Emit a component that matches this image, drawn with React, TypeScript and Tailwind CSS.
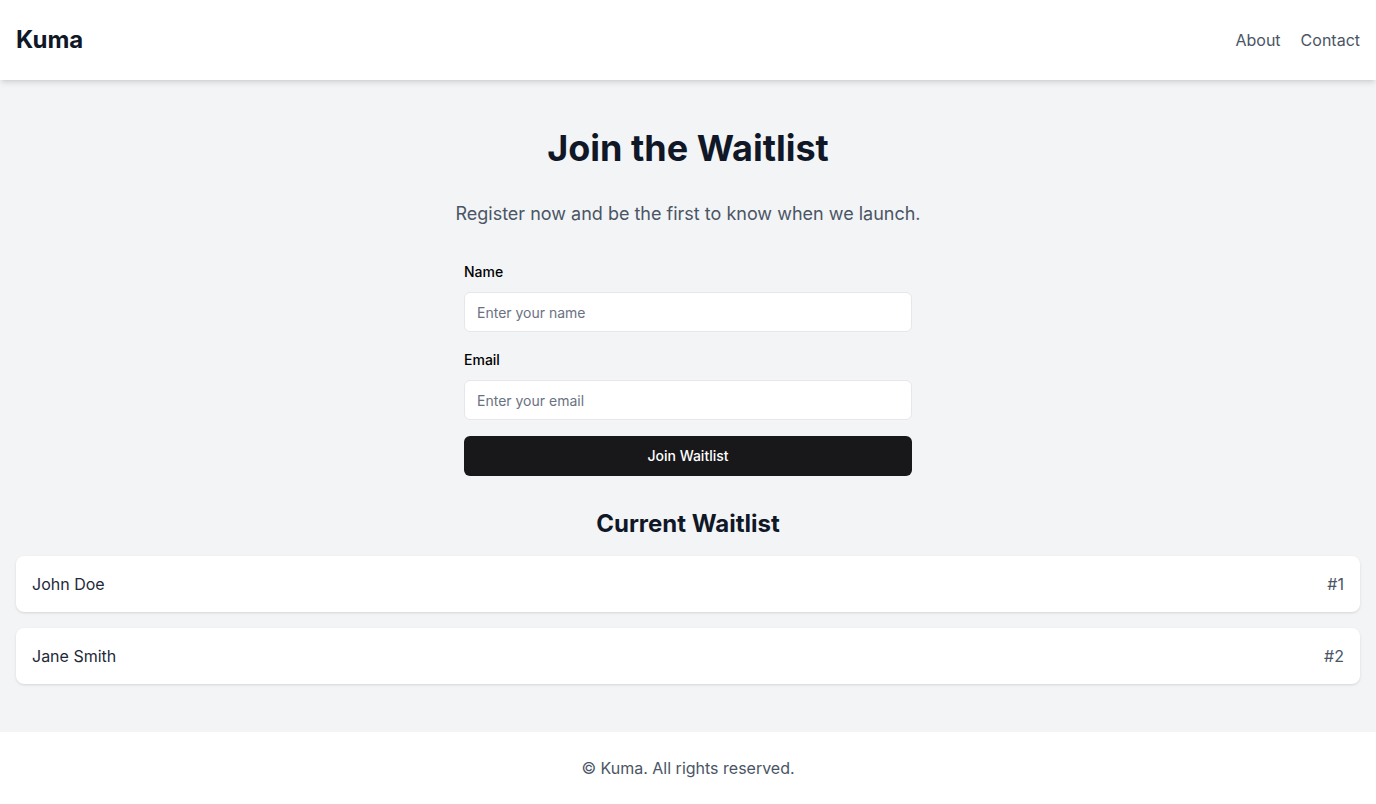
const waitlist = [
    { id: 1, name: 'John Doe' },
    { id: 2, name: 'Jane Smith' },
];

function Header() {
    return (
        <header className="relative z-10 flex h-20 items-center justify-between bg-white px-4 shadow-md">
            <h1 className="text-2xl font-bold text-gray-900">Kuma</h1>
            <nav className="flex items-center gap-5 text-base text-gray-600">
                <a href="#">About</a>
                <a href="#">Contact</a>
            </nav>
        </header>
    );
}

function Field({ label, type, placeholder }: { label: string; type: string; placeholder: string }) {
    return (
        <div>
            <label className="mb-2 block text-sm leading-6 font-medium text-black">{label}</label>
            <input
                type={type}
                placeholder={placeholder}
                className="h-10 w-full rounded-md border border-gray-200 bg-white px-3 text-sm text-gray-900 placeholder:text-gray-500 focus:outline-none"
            />
        </div>
    );
}

export default function App() {
    return (
        <div className="min-h-screen bg-gray-100" style={{ fontFamily: 'Inter, "Noto Sans", sans-serif' }}>
            <Header />

            <main className="px-4 pt-12 pb-12">
                <h2 className="text-center text-4xl font-bold text-gray-900">Join the Waitlist</h2>
                <p className="mt-8 text-center text-lg text-gray-600">
                    Register now and be the first to know when we launch.
                </p>

                <form className="mx-auto mt-8 max-w-md space-y-4" onSubmit={(e) => e.preventDefault()}>
                    <Field label="Name" type="text" placeholder="Enter your name" />
                    <Field label="Email" type="email" placeholder="Enter your email" />
                    <button
                        type="submit"
                        className="h-10 w-full rounded-md bg-zinc-900 text-sm font-medium text-white"
                    >
                        Join Waitlist
                    </button>
                </form>

                <h3 className="mt-8 mb-4 text-center text-2xl font-bold text-gray-900">Current Waitlist</h3>
                <ul className="space-y-4">
                    {waitlist.map((entry) => (
                        <li
                            key={entry.id}
                            className="flex items-center justify-between rounded-lg bg-white px-4 py-4 shadow-sm"
                        >
                            <span className="text-base text-gray-800">{entry.name}</span>
                            <span className="text-base text-gray-600">#{entry.id}</span>
                        </li>
                    ))}
                </ul>
            </main>

            <footer className="bg-white py-6 text-center text-base text-gray-600">
                © Kuma. All rights reserved.
            </footer>
        </div>
    );
}
